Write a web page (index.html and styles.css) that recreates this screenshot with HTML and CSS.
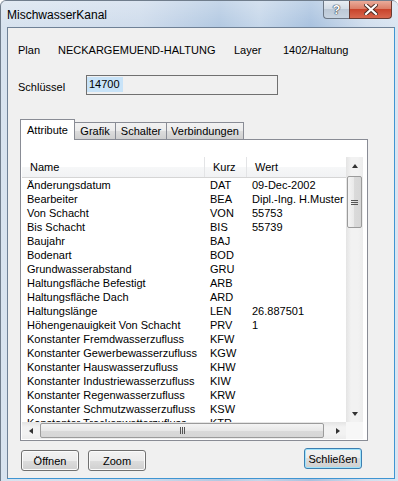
FILE: index.html
```html
<!DOCTYPE html>
<html lang="de">
<head>
    <meta charset="UTF-8">
    <title>MischwasserKanal</title>
    <link rel="stylesheet" href="styles.css">
</head>
<body>

<div class="window">
    <!-- Title bar -->
    <div class="titlebar">
        <span class="title">MischwasserKanal</span>
        <div class="caption-buttons">
            <div class="cap-help">?</div>
            <div class="cap-close">
                <svg width="14" height="11" viewBox="0 0 14 11">
                    <path d="M2 1 L12 10 M12 1 L2 10" stroke="#4a2a22" stroke-width="4" stroke-linecap="square"/>
                    <path d="M2 1 L12 10 M12 1 L2 10" stroke="#fff" stroke-width="2.2" stroke-linecap="square"/>
                </svg>
            </div>
        </div>
    </div>

    <!-- Dialog content -->
    <div class="client">
        <div class="info-row">
            <span class="lbl-plan">Plan</span>
            <span class="val-plan">NECKARGEMUEND-HALTUNG</span>
            <span class="lbl-layer">Layer</span>
            <span>1402/Haltung</span>
        </div>

        <div class="key-row">
            <span class="lbl-key">Schlüssel</span>
            <div class="textbox"><span class="selected">14700</span></div>
        </div>

        <div class="tabs">
            <div class="tab active" style="width:55px">Attribute</div>
            <div class="tab" style="width:42px">Grafik</div>
            <div class="tab" style="width:52px">Schalter</div>
            <div class="tab" style="width:78px">Verbindungen</div>
        </div>

        <div class="tab-panel">
            <div class="listview">
                <div class="list-content">
                    <div class="list-header">
                        <div class="col-name">Name</div>
                        <div class="col-kurz">Kurz</div>
                        <div class="col-wert">Wert</div>
                    </div>
                    <div id="rows"></div>
                </div>
                <div class="vscroll">
                    <div class="arrow"><span class="tri-up"></span></div>
                    <div class="vthumb"><span class="grip-h"></span></div>
                    <div class="spacer"></div>
                    <div class="arrow"><span class="tri-down"></span></div>
                </div>
                <div class="hscroll">
                    <div class="arrow"><span class="tri-left"></span></div>
                    <div class="hthumb"><span class="grip-v"></span></div>
                    <div class="spacer"></div>
                    <div class="arrow"><span class="tri-right"></span></div>
                </div>
                <div class="corner"></div>
            </div>
        </div>

        <div class="button-row">
            <button class="btn low">Öffnen</button>
            <button class="btn low">Zoom</button>
            <button class="btn default">Schließen</button>
        </div>
    </div>
</div>

<script>
    // Attribute rows: name, short code, value
    var attributes = [
        ["Änderungsdatum", "DAT", "09-Dec-2002"],
        ["Bearbeiter", "BEA", "Dipl.-Ing. H.Muster"],
        ["Von Schacht", "VON", "55753"],
        ["Bis Schacht", "BIS", "55739"],
        ["Baujahr", "BAJ", ""],
        ["Bodenart", "BOD", ""],
        ["Grundwasserabstand", "GRU", ""],
        ["Haltungsfläche Befestigt", "ARB", ""],
        ["Haltungsfläche Dach", "ARD", ""],
        ["Haltungslänge", "LEN", "26.887501"],
        ["Höhengenauigkeit Von Schacht", "PRV", "1"],
        ["Konstanter Fremdwasserzufluss", "KFW", ""],
        ["Konstanter Gewerbewasserzufluss", "KGW", ""],
        ["Konstanter Hauswasserzufluss", "KHW", ""],
        ["Konstanter Industriewasserzufluss", "KIW", ""],
        ["Konstanter Regenwasserzufluss", "KRW", ""],
        ["Konstanter Schmutzwasserzufluss", "KSW", ""],
        ["Konstanter Trockenwetterzufluss", "KTR", ""]
    ];

    var rows = document.getElementById("rows");
    attributes.forEach(function(a) {
        rows.innerHTML += "<div class=\"row\">" +
                              "<div class=\"col-name\">" + a[0] + "</div>" +
                              "<div class=\"col-kurz\">" + a[1] + "</div>" +
                              "<div class=\"col-wert\">" + a[2] + "</div>" +
                          "</div>";
    });
</script>

</body>
</html>
```

FILE: styles.css
```css
* {
    box-sizing: border-box;
}
body {
    margin: 0;
    font-family: "Liberation Sans", Arial, sans-serif;
    font-size: 11px;
    color: #000;
    background: #fff;
    overflow: hidden;
}

/* Window frame */
.window {
    width: 398px;
    height: 481px;
    display: flex;
    flex-direction: column;
    padding: 0 3px 2px 6px;
    border-left: 1px solid #707d8c;
    border-top: 1px solid #707d8c;
    border-radius: 6px 6px 0 0;
    background: linear-gradient(to right, #d8e3ef, #cfdcec 35%, #b3c9e2 55%, #c6d7ea 65%, #a9c2df 78%, #d2dfee 92%, #dae5f1);
}
.titlebar {
    height: 26px;
    margin: 0 -3px 0 -6px;
    padding-left: 6px;
    display: flex;
    align-items: flex-start;
    background: linear-gradient(rgba(255,255,255,0.25), rgba(255,255,255,0));
}
.title {
    font-size: 12px;
    line-height: 14px;
    margin-top: 7px;
}
.caption-buttons {
    display: flex;
    margin-left: auto;
    margin-right: 6px;
}
.cap-help {
    width: 26px;
    height: 18px;
    border: 1px solid #6c7785;
    border-top: none;
    border-right: none;
    border-radius: 0 0 0 4px;
    background: linear-gradient(#e8edf3, #d3dce6 45%, #bcc8d6 50%, #c8d4e1);
    color: #fff;
    font-weight: bold;
    font-size: 13px;
    line-height: 17px;
    text-align: center;
    text-shadow: 0 0 1px #2c3440, 0 0 1px #2c3440, 0 0 1px #2c3440;
}
.cap-close {
    width: 43px;
    height: 18px;
    border: 1px solid #6a3a31;
    border-top: none;
    border-radius: 0 0 4px 0;
    background: linear-gradient(#e9ab9a, #db7f69 45%, #c9442c 50%, #d8674e);
    display: flex;
    justify-content: center;
    align-items: center;
}

/* Client area */
.client {
    flex: 1;
    display: flex;
    flex-direction: column;
    background: #f0f0f0;
    border: 1px solid #6f8196;
    border-right-color: #3f95d2;
    border-bottom-color: #3f95d2;
}
.info-row {
    display: flex;
    padding: 16px 0 0 10px;
    line-height: 13px;
}
.lbl-plan {
    width: 40px;
}
.val-plan {
    width: 176px;
}
.lbl-layer {
    width: 49px;
}
.key-row {
    display: flex;
    align-items: flex-start;
    margin-top: 18px;
    padding-left: 10px;
}
.lbl-key {
    width: 68px;
    margin-top: 6px;
    line-height: 13px;
}
.textbox {
    width: 192px;
    height: 20px;
    border: 1px solid #707070;
    background: #f0f0f0;
    padding: 1px 0 0 0;
}
.selected {
    display: inline-block;
    background: #c8e3f8;
    line-height: 15px;
    padding: 0 3px 0 2px;
}

/* Tabs */
.tabs {
    display: flex;
    align-items: flex-end;
    height: 20px;
    margin-top: 24px;
    padding-left: 12px;
    position: relative;
    z-index: 1;
}
.tab {
    height: 17px;
    line-height: 16px;
    text-align: center;
    border: 1px solid #898c95;
    border-bottom: none;
    background: linear-gradient(#f2f2f2, #ebebeb 50%, #dddddd 50%, #cfcfcf);
    margin-left: -1px;
}
.tab:first-child {
    margin-left: 0;
}
.tab.active {
    height: 21px;
    line-height: 20px;
    margin-bottom: -1px;
    background: #fff;
    position: relative;
    z-index: 2;
}
.tab-panel {
    width: 348px;
    height: 302px;
    margin-left: 12px;
    border: 1px solid #898c95;
    background: #fff;
    padding: 17px 4px 1px 1px;
}

/* List view */
.listview {
    height: 282px;
    display: grid;
    grid-template-columns: 1fr 17px;
    grid-template-rows: 1fr 17px;
}
.list-content {
    overflow: hidden;
    white-space: nowrap;
}
.list-header {
    display: flex;
    height: 21px;
    line-height: 20px;
    border-bottom: 1px solid #d5d5d5;
    background: linear-gradient(#fff, #fff 50%, #f6f7f8 50%, #f1f2f4);
}
.list-header div {
    padding-left: 8px;
    border-right: 1px solid #e3e4e6;
}
.list-header .col-wert {
    border-right: none;
}
.row {
    display: flex;
    height: 14px;
    line-height: 14px;
}
.row div {
    padding-left: 5px;
    overflow: hidden;
}
.col-name {
    width: 183px;
    flex: none;
}
.col-kurz {
    width: 42px;
    flex: none;
}
.col-wert {
    flex: 1;
}

/* Scroll bars */
.vscroll {
    display: flex;
    flex-direction: column;
    background: linear-gradient(to right, #e4e4e4, #f2f2f2 30%, #f2f2f2 70%, #ececec);
}
.hscroll {
    display: flex;
    background: linear-gradient(#e4e4e4, #f2f2f2 30%, #f2f2f2 70%, #ececec);
}
.corner {
    background: #f7f7f7;
}
.spacer {
    flex: 1;
}
.arrow {
    width: 17px;
    height: 17px;
    flex: none;
    display: flex;
    justify-content: center;
    align-items: center;
}
.tri-up, .tri-down, .tri-left, .tri-right {
    width: 0;
    height: 0;
    border: 3px solid transparent;
}
.tri-up {
    border-bottom: 4px solid #333;
    border-top-width: 0;
}
.tri-down {
    border-top: 4px solid #333;
    border-bottom-width: 0;
}
.tri-left {
    border-right: 4px solid #333;
    border-left-width: 0;
}
.tri-right {
    border-left: 4px solid #333;
    border-right-width: 0;
}
.vthumb {
    height: 52px;
    margin: 2px 1px 0 1px;
    border: 1px solid #9b9b9b;
    border-radius: 2px;
    background: linear-gradient(to right, #f4f4f4, #e8e8e8 50%, #dadada 50%, #d6d6d6);
    display: flex;
    justify-content: center;
    align-items: center;
}
.hthumb {
    width: 284px;
    margin: 1px 0 1px 1px;
    border: 1px solid #9b9b9b;
    border-radius: 2px;
    background: linear-gradient(#f4f4f4, #e8e8e8 50%, #dadada 50%, #d6d6d6);
    display: flex;
    justify-content: center;
    align-items: center;
}
.grip-h {
    width: 7px;
    height: 5px;
    border-top: 1px solid #555;
    border-bottom: 1px solid #555;
    background: linear-gradient(transparent 1px, #555 1px, #555 2px, transparent 2px);
}
.grip-v {
    width: 5px;
    height: 7px;
    border-left: 1px solid #555;
    border-right: 1px solid #555;
    background: linear-gradient(to right, transparent 1px, #555 1px, #555 2px, transparent 2px);
}

/* Buttons */
.button-row {
    display: flex;
    align-items: flex-start;
    margin-top: 7px;
    padding: 0 32px 0 13px;
}
.btn {
    width: 58px;
    height: 21px;
    padding: 0;
    font-family: "Liberation Sans", Arial, sans-serif;
    font-size: 11px;
    color: #000;
    border: 1px solid #707070;
    border-radius: 3px;
    background: linear-gradient(#f2f2f2, #ebebeb 50%, #dddddd 50%, #cfcfcf);
    box-shadow: inset 0 0 0 1px #fbfbfb;
}
.btn.low {
    margin-top: 2px;
    margin-right: 9px;
}
.btn.default {
    margin-left: auto;
    border-color: #3c7fb1;
    box-shadow: inset 0 0 0 1px #9fe3fb;
}
```
